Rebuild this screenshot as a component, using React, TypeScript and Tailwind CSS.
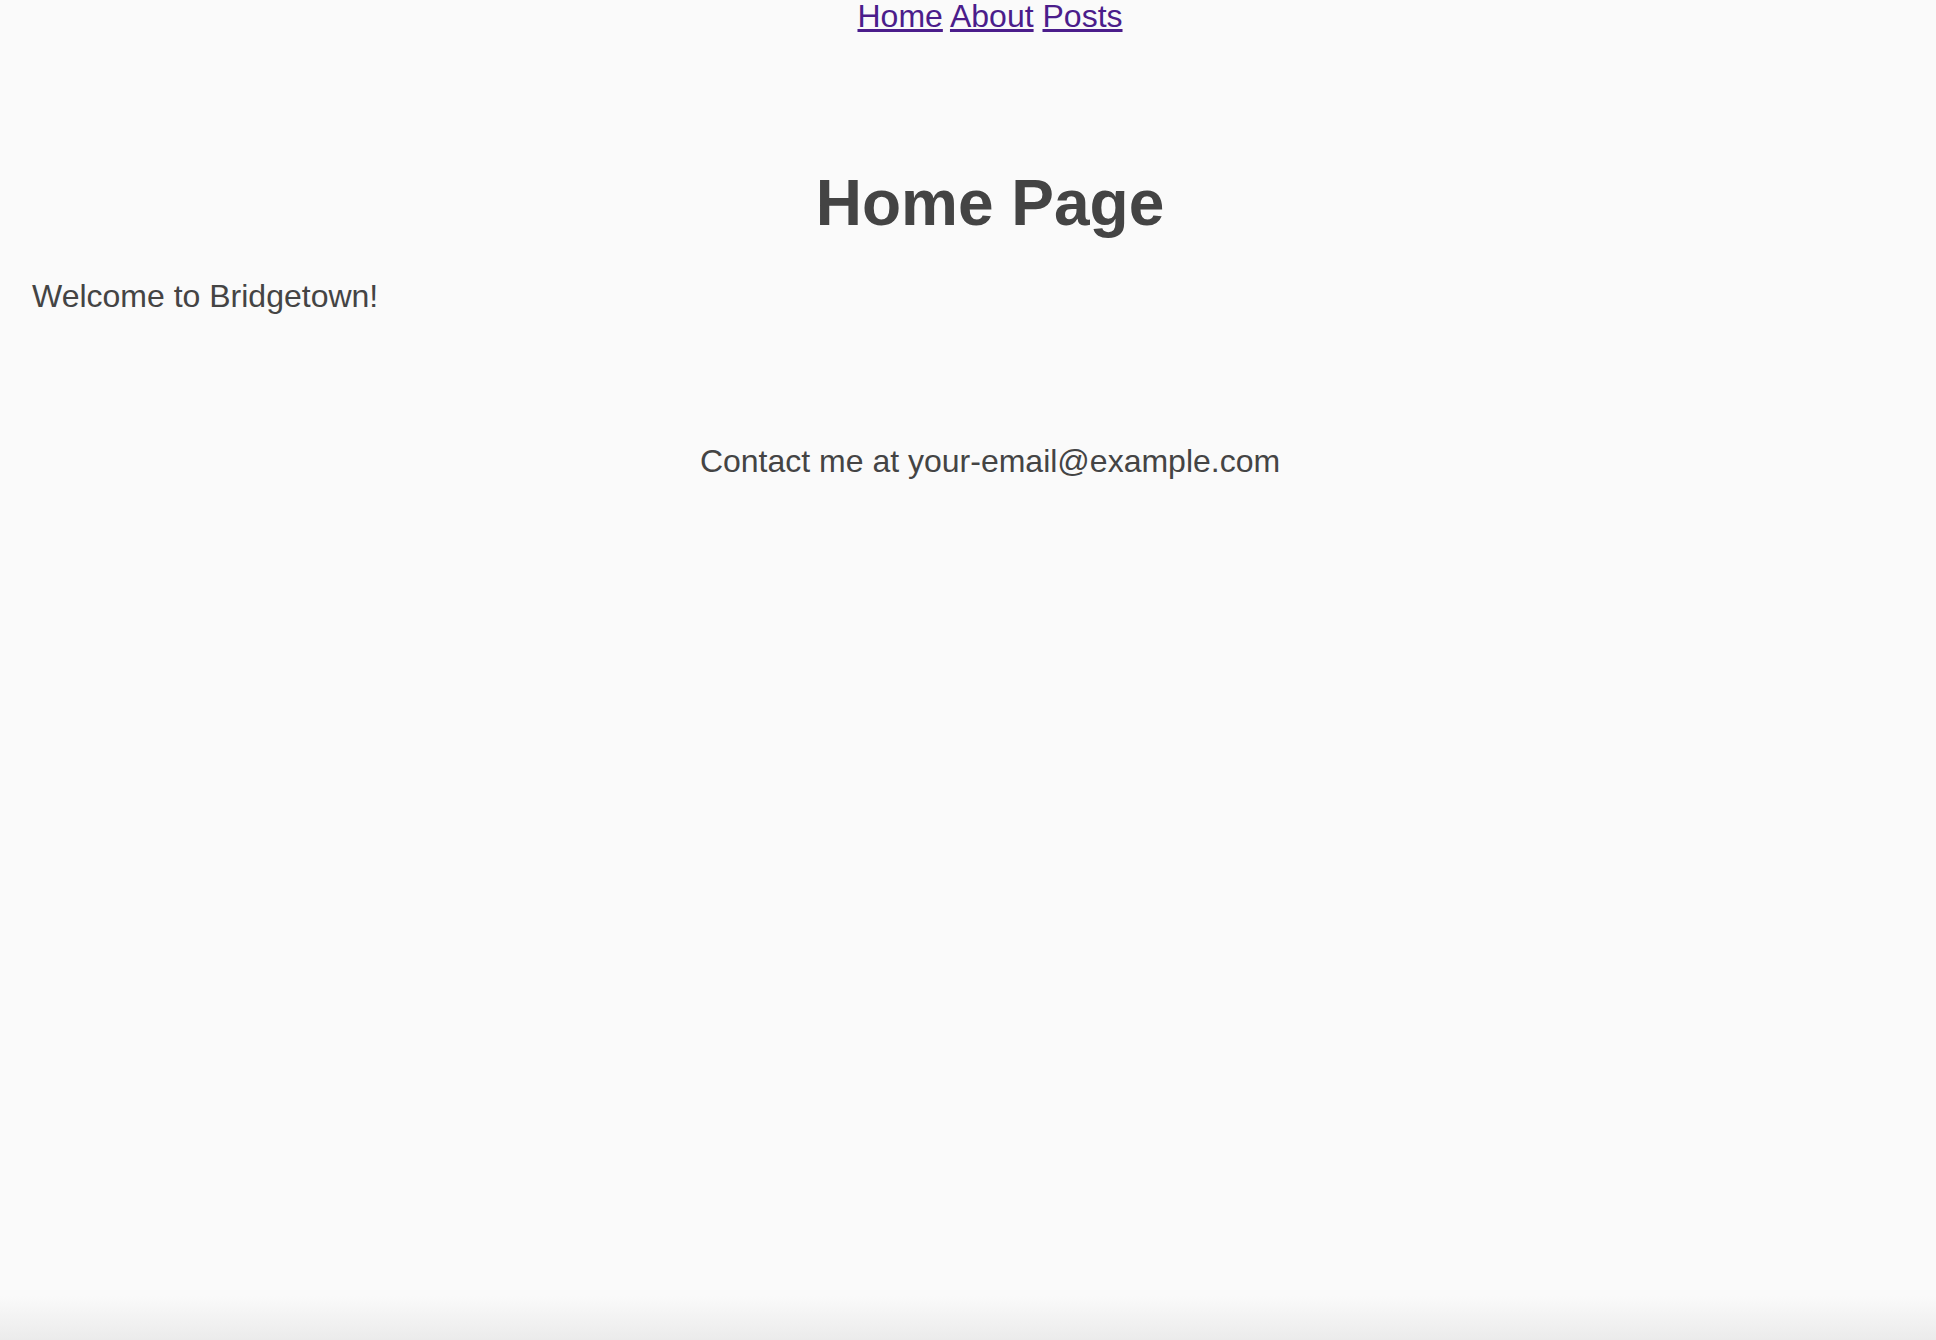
export default function App() {
  return (
    <div className="min-h-screen bg-[linear-gradient(to_bottom,#fafafa_0,#fafafa_1296px,#ebebeb_1340px)] font-['Liberation_Sans',Arial,Helvetica,sans-serif] text-[32px] leading-[37px] text-[#444444]">
      {/* top nav */}
      <nav className="pl-[44px] text-center leading-[33px]">
        <a href="#" className="text-[#4b1d8b] underline">Home</a>{' '}
        <a href="#" className="text-[#4b1d8b] underline">About</a>{' '}
        <a href="#" className="text-[#4b1d8b] underline">Posts</a>
      </nav>

      <main className="px-8">
        <h1 className="mt-[133px] mb-[38px] pl-[44px] text-center text-[64px] leading-[74px] font-bold">Home Page</h1>
        <p>Welcome to Bridgetown!</p>
      </main>

      <footer className="mt-[128px] pl-[44px] text-center">
        Contact me at your-email@example.com
      </footer>
    </div>
  );
}
